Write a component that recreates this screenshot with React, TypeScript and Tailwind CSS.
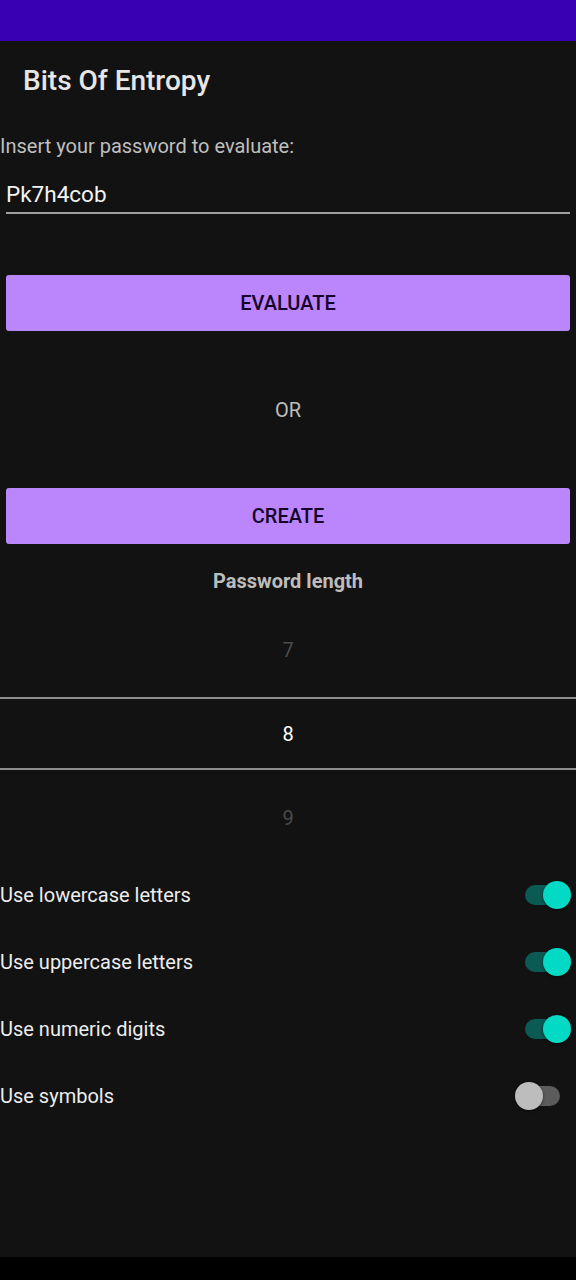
import React from "react";

const font = { fontFamily: "Roboto, 'Noto Sans', sans-serif" };

function Toggle({ on }: { on: boolean }) {
  if (on) {
    return (
      <div className="relative mr-[5px] h-[28px] w-[46px]">
        <div className="absolute left-0 top-[4px] h-[20px] w-[42px] rounded-full bg-[#0b5a54]" />
        <div className="absolute right-0 top-0 h-[28px] w-[28px] rounded-full bg-[#03dac5] shadow-[0_1px_3px_rgba(0,0,0,0.5)]" />
      </div>
    );
  }
  return (
    <div className="relative mr-[16px] h-[28px] w-[45px]">
      <div className="absolute right-0 top-[4px] h-[20px] w-[42px] rounded-full bg-[#5c5c5c]" />
      <div className="absolute left-0 top-0 h-[28px] w-[28px] rounded-full bg-[#bdbdbd] shadow-[0_1px_3px_rgba(0,0,0,0.5)]" />
    </div>
  );
}

const options = [
  { label: "Use lowercase letters", on: true },
  { label: "Use uppercase letters", on: true },
  { label: "Use numeric digits", on: true },
  { label: "Use symbols", on: false },
];

export default function App() {
  return (
    <div className="flex min-h-[1280px] w-[576px] flex-col bg-[#121212]" style={font}>
      <div className="h-[41px] bg-[#3700b3]" />

      <div className="flex h-[80px] items-center pl-[23px] text-[28px] font-medium text-[#e6e6e6]">
        Bits Of Entropy
      </div>

      <div className="flex h-[50px] items-center text-[20px] text-[#bfbfbf]">Insert your password to evaluate:</div>

      <div className="mx-[6px] mt-[6px] flex h-[37px] items-center border-b-2 border-[#9e9e9e] text-[22.5px] text-[#f2f2f2]">
        Pk7h4cob
      </div>

      <button className="mx-[6px] mt-[61px] flex h-[56px] items-center justify-center rounded-[3px] bg-[#bb86fc] text-[20px] font-medium text-[#14002a]">
        EVALUATE
      </button>

      <div className="flex h-[157px] items-center justify-center text-[20px] text-[#bdbdbd]">OR</div>

      <button className="mx-[6px] flex h-[56px] items-center justify-center rounded-[3px] bg-[#bb86fc] text-[20px] font-medium text-[#14002a]">
        CREATE
      </button>

      <div className="flex h-[74px] items-center justify-center text-[20px] font-bold text-[#bdbdbd]">Password length</div>

      <div className="flex flex-col">
        <div className="mb-[15px] flex h-[64px] items-center justify-center text-[20px] text-[#4a4a4a]">7</div>
        <div className="h-[2px] bg-[#8c8c8c]" />
        <div className="flex h-[69px] items-center justify-center text-[20px] text-white">8</div>
        <div className="h-[2px] bg-[#8c8c8c]" />
        <div className="flex h-[91px] items-center justify-center pt-[5px] text-[20px] text-[#4a4a4a]">9</div>
      </div>

      {options.map((o) => (
        <div key={o.label} className="flex h-[67px] items-center justify-between">
          <span className="text-[20px] text-[#ededed]">{o.label}</span>
          <Toggle on={o.on} />
        </div>
      ))}

      <div className="flex-1" />
      <div className="h-[23px] bg-black" />
    </div>
  );
}
